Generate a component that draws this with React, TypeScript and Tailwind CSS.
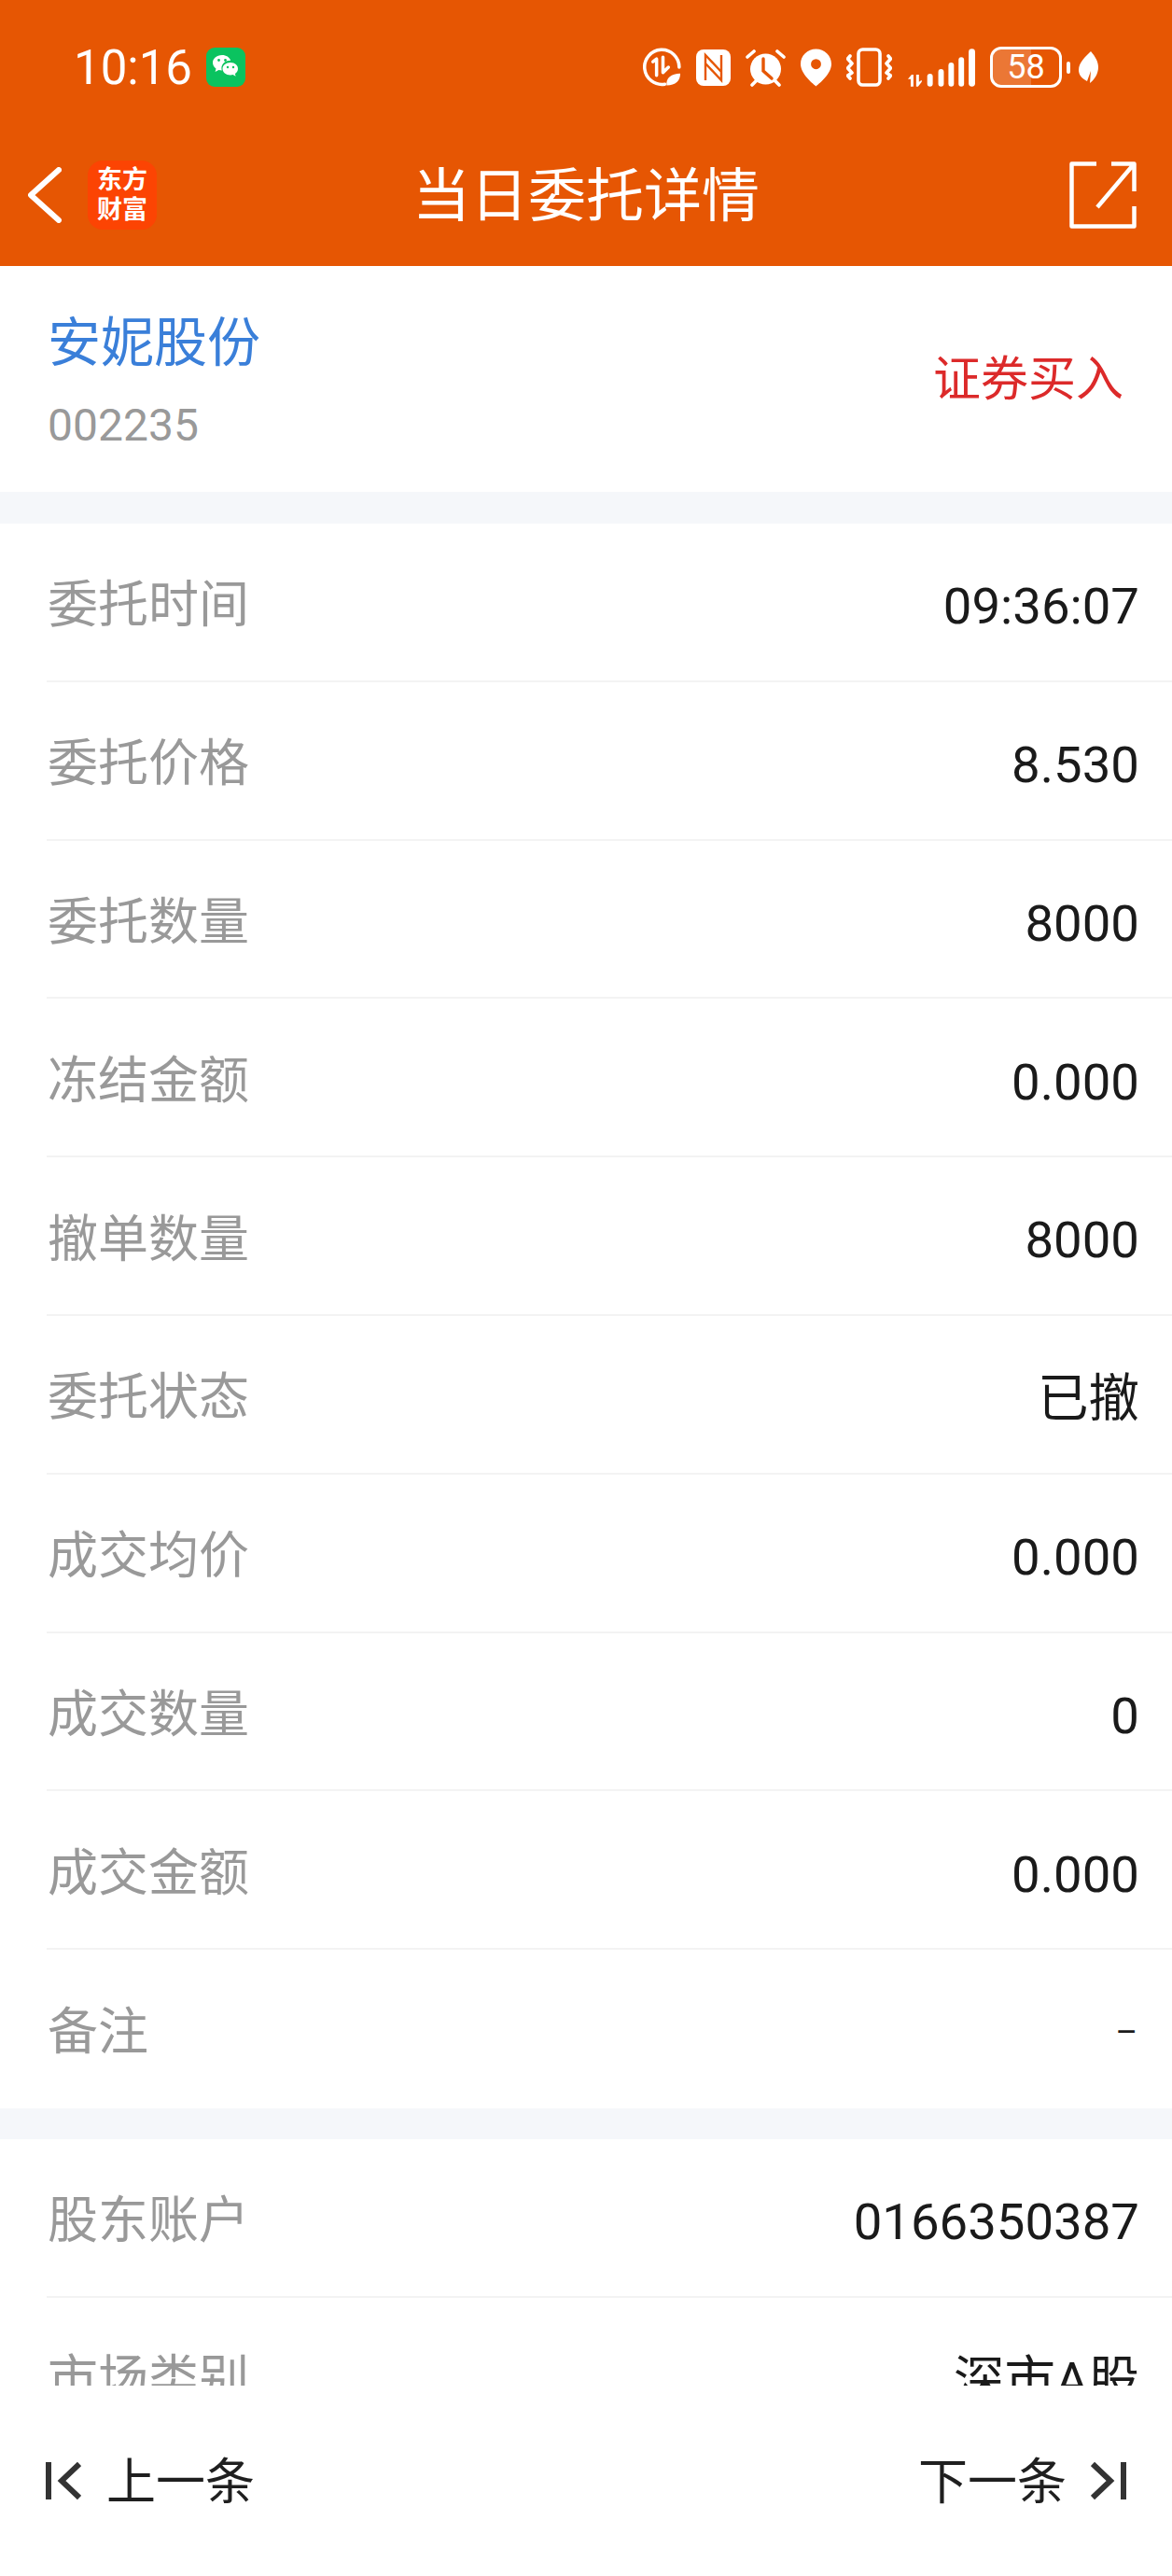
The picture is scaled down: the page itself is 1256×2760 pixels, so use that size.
const FONT = 'font-["Roboto","Noto_Sans_CJK_SC",sans-serif]';

const orderRows = [
  { label: '委托时间', value: '09:36:07' },
  { label: '委托价格', value: '8.530' },
  { label: '委托数量', value: '8000' },
  { label: '冻结金额', value: '0.000' },
  { label: '撤单数量', value: '8000' },
  { label: '委托状态', value: '已撤' },
  { label: '成交均价', value: '0.000' },
  { label: '成交数量', value: '0' },
  { label: '成交金额', value: '0.000' },
];

const accountRows = [
  { label: '股东账户', value: '0166350387' },
  { label: '市场类别', value: '深市A股' },
  { label: '委托编号', value: '1182736' },
];

function DetailRow({ label, value, last, small }: { label: string; value: string; last?: boolean; small?: boolean }) {
  return (
    <div className="relative flex h-[169.8px] shrink-0 items-center justify-between pl-[51px] pr-[35px] pt-[7px]">
      <span className="text-[54px] leading-none text-[#999999]">{label}</span>
      <span className={small ? 'mr-[2px] text-[36px] leading-none text-[#1a1a1a]' : 'text-[54.5px] leading-none text-[#1a1a1a]'}>
        {value}
      </span>
      {!last && <div className="absolute bottom-0 left-[50px] right-0 h-[2px] bg-[#f3f3f3]" />}
    </div>
  );
}

function DataIcon() {
  return (
    <svg width="41" height="42" viewBox="0 0 42 42" fill="none" stroke="#fff">
      <path d="M24 39.6A19 19 0 1 1 39.8 21" strokeWidth="3.6" strokeLinecap="round" />
      <path d="M11 15l4-3v18" strokeWidth="3.6" strokeLinecap="round" strokeLinejoin="round" />
      <path d="M22 10v17l6-6" strokeWidth="3.6" strokeLinecap="round" strokeLinejoin="round" />
      <path d="M26 41c-1-8 5-13 15-13 0 8-5 13-15 13z" fill="#fff" stroke="none" />
    </svg>
  );
}

function NfcIcon() {
  return (
    <svg width="37" height="39" viewBox="0 0 37 39">
      <rect width="37" height="39" rx="8" fill="#fff" />
      <path d="M10 33V6l17 18M27 6v27L10 15" fill="none" stroke="#e65603" strokeWidth="2.4" />
    </svg>
  );
}

function AlarmIcon() {
  return (
    <svg width="43" height="41" viewBox="0 0 43 41" fill="none" stroke="#fff" strokeWidth="3.6" strokeLinecap="round">
      <circle cx="21.5" cy="22" r="16.5" fill="#fff" stroke="none" />
      <path d="M2 9l7-6M41 9l-7-6M7 39l4-4M36 39l-4-4" />
      <path d="M19 11v13l9 8" stroke="#e65603" strokeWidth="3.4" />
    </svg>
  );
}

function PinIcon() {
  return (
    <svg width="33" height="41" viewBox="0 0 34 41">
      <path
        fillRule="evenodd"
        fill="#fff"
        d="M17 0c9.4 0 17 7.3 17 16.4C34 27 22 37 17 41 12 37 0 27 0 16.4 0 7.3 7.6 0 17 0zm0 11a5.600 5.600 0 1 0 0 11.200a5.600 5.600 0 0 0 0-11.200z"
      />
    </svg>
  );
}

function VibrateIcon() {
  return (
    <svg width="49" height="42" viewBox="0 0 49 42" fill="none" stroke="#fff" strokeWidth="3.6" strokeLinecap="round" strokeLinejoin="round">
      <rect x="13" y="2" width="23" height="38" rx="4.500" />
      <path d="M4 9l-2.500 3L6 17l-4.500 5L6 27l-4.500 3L4 33" />
      <path d="M45 9l2.500 3L43 17l4.500 5L43 27l4.500 3L45 33" />
    </svg>
  );
}

function SignalIcon() {
  return (
    <svg width="73" height="41" viewBox="0 0 74 41" fill="#fff">
      <path d="M1 33l4-5h2v13H4V33zM10 28h3v8l3-2v2l-4 5h-2z" />
      <rect x="22" y="27" width="6" height="14" rx="3" />
      <rect x="34" y="22" width="6" height="19" rx="3" />
      <rect x="45" y="15" width="6" height="26" rx="3" />
      <rect x="56" y="9" width="6" height="32" rx="3" />
      <rect x="67" y="0" width="7" height="41" rx="3.500" />
    </svg>
  );
}

function LeafIcon() {
  return (
    <svg width="21" height="34" viewBox="0 0 21 34" fill="#fff">
      <path d="M13 0c5 6 8 11 8 17 0 7-4 13-9 17l1-13-4 11C3 29 0 25 0 20 0 12 7 6 13 0z" />
    </svg>
  );
}

function WechatBadge() {
  return (
    <div className="flex h-[42px] w-[42px] items-center justify-center rounded-[9px] bg-[#0ac35f]">
      <svg width="30" height="28" viewBox="0 0 30 28" fill="#fff">
        <path d="M11 1C5 1 1 4.800 1 9.200c0 2.600 1.400 4.800 3.500 6.300L3.600 19l3.800-2c1 .3 2.200.5 3.400.5-.3-.9-.4-1.700-.4-2.500 0-4.800 4.500-8.200 9.800-8.200C19 3.300 15.400 1 11 1z" />
        <path d="M20 9c-4.900 0-8.500 3-8.500 6.700s3.600 6.700 8.500 6.700c.9 0 1.800-.1 2.600-.4l3 1.800-.7-2.900c1.800-1.300 3.100-3.100 3.100-5.200C28 12 24.900 9 20 9z" />
        <circle cx="7.500" cy="6.500" r="1.400" fill="#0ac35f" />
        <circle cx="14.500" cy="6.500" r="1.400" fill="#0ac35f" />
        <circle cx="17" cy="14" r="1.200" fill="#0ac35f" />
        <circle cx="23" cy="14" r="1.200" fill="#0ac35f" />
      </svg>
    </div>
  );
}

function ShareIcon() {
  return (
    <svg width="72" height="72" viewBox="0 0 72 72" fill="none" stroke="#fff" strokeWidth="4.500" strokeLinejoin="round">
      <path d="M29 2.500H2.500v67h67V48" />
      <path d="M30 49L69 3M45 2.500h24.500V32" />
    </svg>
  );
}

export default function App() {
  return (
    <div className={`flex h-[2760px] w-[1256px] flex-col overflow-hidden bg-white ${FONT}`}>
      {/* Orange header: status bar and nav */}
      <div className="flex h-[285px] shrink-0 flex-col bg-[#e65603] text-white">
        <div className="mt-[51px] flex h-[42px] items-center justify-between pl-[79px] pr-[79px]">
          <div className="flex items-center gap-[15px]">
            <span className="text-[51px] leading-none">10:16</span>
            <WechatBadge />
          </div>
          <div className="flex items-center gap-[16px]">
            <DataIcon />
            <NfcIcon />
            <AlarmIcon />
            <PinIcon />
            <VibrateIcon />
            <SignalIcon />
            <div className="relative flex h-[44px] w-[77px] items-center justify-center overflow-hidden rounded-[12px] border-[3.5px] border-white">
              <div className="absolute inset-y-0 left-0 w-[58%] bg-white/20" />
              <span className="relative text-[36px] leading-none">58</span>
            </div>
            <div className="-ml-[11px] h-[13px] w-[4px] rounded-full bg-white" />
            <div className="-ml-[7px]">
              <LeafIcon />
            </div>
          </div>
        </div>
        <div className="mt-[79px] grid h-[74px] grid-cols-[1fr_auto_1fr] items-center">
          <div className="flex items-center pl-[30px]">
            <svg width="36" height="60" viewBox="0 0 36 60" fill="none" stroke="#fff" strokeWidth="6" strokeLinecap="round" strokeLinejoin="round" className="shrink-0">
              <path d="M33 3L3 30l30 27" />
            </svg>
            <div className="ml-[28px] flex h-[74px] w-[74px] flex-col items-center justify-center rounded-[16px] bg-[#fc4403] text-[27px] font-bold leading-[32px]">
              <span>东方</span>
              <span>财富</span>
            </div>
          </div>
          <h1 className="pt-[4px] text-[62px] font-normal leading-none">当日委托详情</h1>
          <div className="flex justify-end pr-[38px]">
            <ShareIcon />
          </div>
        </div>
      </div>

      {/* Scrolling content, cut off by the footer */}
      <div className="flex min-h-0 flex-1 flex-col overflow-hidden bg-white">
        <div className="flex h-[242px] shrink-0 items-center justify-between pl-[51px] pr-[52px]">
          <div className="mt-[6px] flex flex-col">
            <span className="text-[57px] leading-none text-[#3a7fd9]">安妮股份</span>
            <span className="mt-[36px] text-[48px] leading-none text-[#999999]">002235</span>
          </div>
          <span className="mt-[1px] text-[51px] leading-none text-[#dc2a2a]">证券买入</span>
        </div>
        <div className="h-[34px] shrink-0 bg-[#f5f7fa]" />
        {orderRows.map((row) => (
          <DetailRow key={row.label} {...row} />
        ))}
        <DetailRow label="备注" value="–" last small />
        <div className="h-[33px] shrink-0 bg-[#f5f7fa]" />
        {accountRows.map((row) => (
          <DetailRow key={row.label} {...row} />
        ))}
      </div>

      {/* Previous / next bar */}
      <div className="flex h-[204px] shrink-0 items-center justify-between bg-white pl-[49px] pr-[49px] text-[53px] leading-none text-[#1f1f1f]">
        <div className="flex items-center gap-[27px]">
          <svg width="38" height="42" viewBox="0 0 38 42" fill="none" stroke="#333" strokeWidth="6">
            <path d="M3 1v40M36 3L17 21l19 18" />
          </svg>
          <span className="pt-[5px]">上一条</span>
        </div>
        <div className="flex items-center gap-[26px]">
          <span className="pt-[5px]">下一条</span>
          <svg width="38" height="42" viewBox="0 0 38 42" fill="none" stroke="#333" strokeWidth="6">
            <path d="M35 1v40M2 3l19 18L2 39" />
          </svg>
        </div>
      </div>
    </div>
  );
}
